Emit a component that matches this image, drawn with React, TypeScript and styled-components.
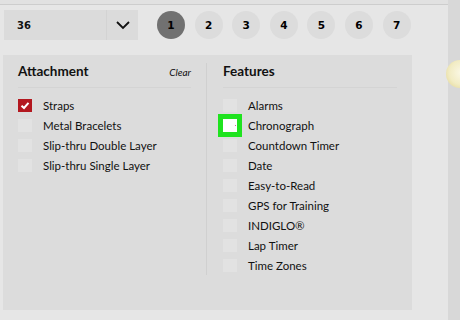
import React from 'react';
import styled, { createGlobalStyle } from 'styled-components';

const GlobalStyle = createGlobalStyle`
  html, body {
    margin: 0;
    padding: 0;
    background: #e6e6e6;
    font-family: 'Lato', 'Liberation Sans', sans-serif;
    color: #111;
  }
`;

const StyledPage = styled.div`
  display: flex;
  width: 460px;
  height: 320px;
  overflow: hidden;
`;

const StyledContent = styled.div`
  width: 448px;
  display: flex;
  flex-direction: column;
`;

const StyledTopStrip = styled.div`
  height: 4px;
  background: #e1e1e1;
  border-bottom: 1px solid #cdcdcd;
`;

const StyledToolbar = styled.div`
  display: flex;
  align-items: center;
  padding: 5px 0 0 4px;
`;

const StyledSelect = styled.div`
  display: flex;
  width: 134px;
  height: 30px;
  background: #dbdbdb;

  .select__value {
    flex: 1;
    display: flex;
    align-items: center;
    padding-left: 13px;
    font-family: 'DejaVu Sans', sans-serif;
    font-weight: bold;
    font-size: 10px;
  }

  .select__arrow {
    width: 31px;
    display: flex;
    align-items: center;
    justify-content: center;
    border-left: 1px solid #d3d3d3;
  }
`;

const StyledPages = styled.div`
  display: flex;
  gap: 9.6px;
  margin-left: 19px;
`;

const StyledPageDot = styled.div<{ $active?: boolean }>`
  width: 28px;
  height: 28px;
  border-radius: 50%;
  background: ${({ $active }) => ($active ? '#717171' : '#dcdcdc')};
  display: flex;
  align-items: center;
  justify-content: center;
  font-family: 'DejaVu Sans', sans-serif;
  font-weight: bold;
  font-size: 10.5px;
  color: #000;
`;

const StyledPanel = styled.div`
  margin: 15px 0 0 3px;
  width: 409px;
  height: 255px;
  background: #dcdcdc;
  display: grid;
  grid-template-columns: 203px 1fr;
`;

const StyledColumn = styled.div<{ $divider?: boolean }>`
  padding: ${({ $divider }) => ($divider ? '0 15px 0 16px' : '8px 15px 0 15px')};
  border-left: ${({ $divider }) => ($divider ? '1px solid #d0d0d0' : 'none')};
  margin: ${({ $divider }) => ($divider ? '8px 0 38px' : '0')};
`;

const StyledHead = styled.div`
  display: flex;
  align-items: baseline;
  justify-content: space-between;
  height: 24px;
  border-bottom: 1px solid #d4d4d4;
  margin-bottom: 7px;

  .head__title {
    font-weight: bold;
    font-size: 13.5px;
    line-height: 16px;
  }

  .head__clear {
    font-style: italic;
    font-size: 10px;
  }
`;

const StyledOption = styled.div`
  display: flex;
  align-items: center;
  height: 20px;
  font-size: 11.5px;
`;

const StyledBox = styled.div<{ $checked?: boolean; $marked?: boolean }>`
  width: 14px;
  height: 13px;
  margin-right: 11px;
  flex-shrink: 0;
  display: flex;
  align-items: center;
  justify-content: center;
  background: ${({ $checked, $marked }) =>
    $checked ? '#b3181f' : $marked ? '#ffffff' : '#e2e2e2'};
  outline: ${({ $marked }) => ($marked ? '5px solid #1fe31f' : 'none')};
  position: relative;

  &::after {
    content: '';
    display: ${({ $marked }) => ($marked ? 'block' : 'none')};
    position: absolute;
    right: 1px;
    top: 6px;
    width: 1px;
    height: 1px;
    background: #d0609a;
  }
`;

const StyledRail = styled.div`
  flex: 1;
  background: #d8d8d8;
  position: relative;

  .rail__ball {
    position: absolute;
    left: -2px;
    top: 60px;
    width: 28px;
    height: 28px;
    border-radius: 50%;
    background: radial-gradient(circle at 55% 45%, #fbf8e6 0%, #f2ecc4 55%, #e0d38c 100%);
  }
`;

const attachments = ['Straps', 'Metal Bracelets', 'Slip-thru Double Layer', 'Slip-thru Single Layer'];
const features = [
  'Alarms',
  'Chronograph',
  'Countdown Timer',
  'Date',
  'Easy-to-Read',
  'GPS for Training',
  'INDIGLO®',
  'Lap Timer',
  'Time Zones',
];

const Check = () => (
  <svg width="10" height="9" viewBox="0 0 10 9">
    <path d="M1.5 4.8 L4 7 L8.5 1.8" stroke="#fff" strokeWidth="2" fill="none" />
  </svg>
);

const App = () => {
  return (
    <>
      <GlobalStyle />
      <StyledPage>
        <StyledContent>
          <StyledTopStrip />
          <StyledToolbar>
            <StyledSelect>
              <span className="select__value">36</span>
              <span className="select__arrow">
                <svg width="16" height="10" viewBox="0 0 16 10">
                  <path d="M2 2 L8 8 L14 2" stroke="#111" strokeWidth="1.8" fill="none" />
                </svg>
              </span>
            </StyledSelect>
            <StyledPages>
              {[1, 2, 3, 4, 5, 6, 7].map((n) => (
                <StyledPageDot key={n} $active={n === 1}>
                  {n}
                </StyledPageDot>
              ))}
            </StyledPages>
          </StyledToolbar>
          <StyledPanel>
            <StyledColumn>
              <StyledHead>
                <span className="head__title">Attachment</span>
                <span className="head__clear">Clear</span>
              </StyledHead>
              {attachments.map((name, i) => (
                <StyledOption key={name}>
                  <StyledBox $checked={i === 0}>{i === 0 && <Check />}</StyledBox>
                  {name}
                </StyledOption>
              ))}
            </StyledColumn>
            <StyledColumn $divider>
              <StyledHead>
                <span className="head__title">Features</span>
              </StyledHead>
              {features.map((name) => (
                <StyledOption key={name}>
                  <StyledBox $marked={name === 'Chronograph'} />
                  {name}
                </StyledOption>
              ))}
            </StyledColumn>
          </StyledPanel>
        </StyledContent>
        <StyledRail>
          <div className="rail__ball" />
        </StyledRail>
      </StyledPage>
    </>
  );
};

export default App;
